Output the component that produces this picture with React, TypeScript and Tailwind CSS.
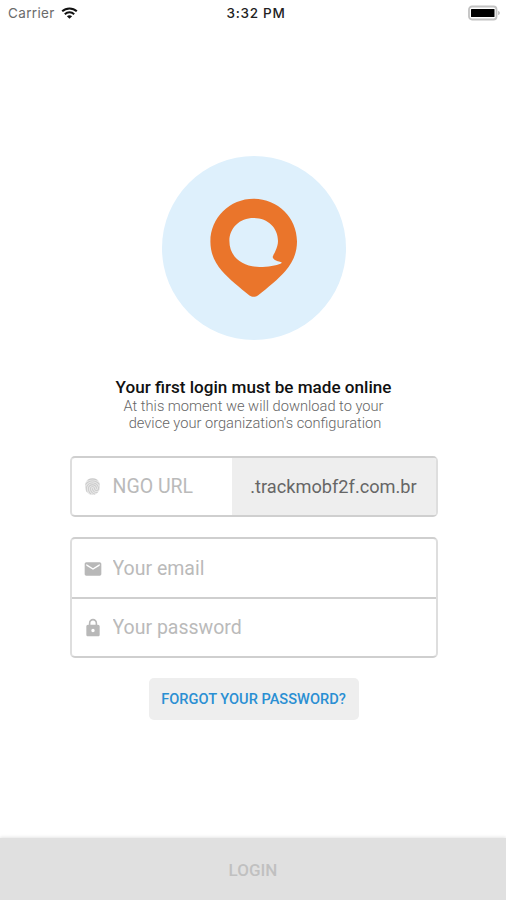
import { useState } from 'react'
import { MdEmail, MdFingerprint, MdLock } from 'react-icons/md'

const StatusBar = () => {
  return (
    <header className="grid grid-cols-3 items-center h-[26px] pl-2 pr-[5px] font-['Inter',sans-serif]">
      <div className="flex items-center gap-[6px]">
        <span className="pt-px text-[13.5px] text-[#6b6b6b] tracking-[0.35px]">Carrier</span>
        <svg width="17" height="12" viewBox="0 0 17 12" fill="none">
          <path d="M1.2 4.3C5.3 0.4 11.7 0.4 15.8 4.3" stroke="#111" strokeWidth="2" />
          <path d="M3.8 7.2C6.5 4.7 10.5 4.7 13.2 7.2" stroke="#111" strokeWidth="2" />
          <path d="M8.5 11.8L5.9 9.2C7.4 7.9 9.6 7.9 11.1 9.2Z" fill="#111" />
        </svg>
      </div>
      <span className="pt-px pl-[3px] text-center text-[13.5px] text-[#222] font-medium tracking-[0.7px] whitespace-nowrap">
        3:32 PM
      </span>
      <svg className="justify-self-end" width="34" height="16" viewBox="0 0 34 16">
        <rect x="2" y="1.5" width="27.5" height="13" rx="3" fill="#fff" stroke="#c2c2c2" strokeWidth="1.8" />
        <rect x="4" y="4" width="23.5" height="8" rx="0.5" fill="#000" />
        <path d="M31 6C33.6 6.6 33.6 9.4 31 10Z" fill="#c2c2c2" />
      </svg>
    </header>
  )
}

const Logo = () => {
  return (
    <div className="flex justify-center items-center w-[184px] h-[184px] rounded-full bg-[#def0fc]">
      <svg width="184" height="184" viewBox="0 0 184 184">
        <path
          d="M91.7 42.8C67.8 42.8 48.4 61.7 48.4 85.5C48.4 97 52.5 106.5 60 115C67 123 77.5 131.5 87.5 139.4C90 141.3 93.4 141.3 95.9 139.4C106 131.5 116.5 123 123.4 115C130.8 106.5 135 97 135 85.5C135 61.7 115.6 42.8 91.7 42.8Z"
          fill="#ea752b"
        />
        <path
          d="M91.7 62C77.5 62 67.4 72 67.4 85C67.4 101 80.5 110.9 97.5 110.9C106 110.9 114 109.6 119 107.4C120.2 106.8 119.8 106.1 118.5 105.9C114.8 105.5 111.5 103.8 110.8 101.6C110.4 100 112 98.5 113.2 95.5C115 91.5 116 88.5 116 85C116 72 106 62 91.7 62Z"
          fill="#def0fc"
        />
      </svg>
    </div>
  )
}

const Field = (props: {
  icon: React.ReactNode
  placeholder: string
  type?: string
}) => {
  const { icon, placeholder, type = 'text' } = props
  const [value, setValue] = useState('')

  return (
    <label className="flex flex-1 min-w-0 items-center gap-[10px] pl-[11px] h-full">
      <span className="flex justify-center items-center shrink-0 w-5">{icon}</span>
      <input
        type={type}
        value={value}
        onChange={(e) => setValue(e.target.value)}
        placeholder={placeholder}
        className="w-full min-w-0 outline-none text-[19.5px] text-[#555] placeholder:text-[#bababa]"
      />
    </label>
  )
}

const App = () => {
  return (
    <div className="flex flex-col h-screen bg-white font-['Roboto',sans-serif]">
      <StatusBar />

      <main className="flex flex-1 flex-col items-center pt-[130px] pl-[1px]">
        <Logo />

        <h1 className="mt-[37px] text-[17.1px] leading-5 font-medium text-[#111] whitespace-nowrap">
          Your first login must be made online
        </h1>
        <p className="pt-px text-center text-[14.65px] leading-[17px] font-light text-[#666] whitespace-nowrap">
          At this moment we will download to your
          <br />
          <span className="pl-[3px]">device your organization's configuration</span>
        </p>

        <form className="flex flex-col items-center w-[368px] mt-[24px]">
          <div className="flex w-full h-[61px] rounded-[5px] border-2 border-x-[#dedede] border-y-[#cfcfcf] overflow-hidden">
            <Field
              icon={
                <span className="flex justify-center items-center w-[15px] h-[17px] rounded-full bg-[#e6e6e6]">
                  <MdFingerprint className="shrink-0 text-[19px] text-[#c8c8c8]" />
                </span>
              }
              placeholder="NGO URL"
            />
            <span className="flex items-center justify-center w-[204px] pt-px bg-[#eeeeee] text-[18.2px] text-[#666]">
              .trackmobf2f.com.br
            </span>
          </div>

          <div className="flex flex-col w-full h-[121px] mt-5 rounded-[5px] border-2 border-x-[#dedede] border-y-[#cfcfcf]">
            <div className="h-[60px] pt-px border-b-2 border-[#cfcfcf]">
              <Field
                icon={<MdEmail className="text-[20px] text-[#b8b8b8]" />}
                placeholder="Your email"
              />
            </div>
            <div className="flex-1 pt-px">
              <Field
                icon={<MdLock className="text-[20px] text-[#b8b8b8]" />}
                placeholder="Your password"
                type="password"
              />
            </div>
          </div>

          <button
            type="button"
            className="w-[210px] h-[42px] mt-5 pt-px rounded-[5px] bg-[#eeeeee] text-[14.6px] font-medium text-[#2a8fd3] whitespace-nowrap"
          >
            FORGOT YOUR PASSWORD?
          </button>
        </form>
      </main>

      <button
        disabled
        className="h-[62px] pt-[3px] bg-[#e0e0e0] text-[17px] font-medium text-[#c0c0c0] shadow-[0_-1px_3px_rgba(0,0,0,0.1)]"
      >
        LOGIN
      </button>
    </div>
  )
}

export default App
